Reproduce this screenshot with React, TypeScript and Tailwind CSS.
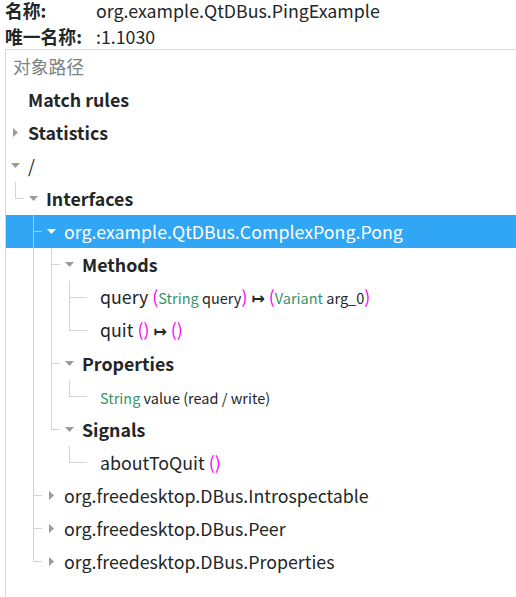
import React from "react";

type G = "none" | "pipe" | "tee" | "ell";
type Arrow = "down" | "right" | "leaf" | "leafline";

type Row = {
  guides: G[];
  arrow: Arrow;
  content: React.ReactNode;
  selected?: boolean;
};

const M = ({ children }: { children: React.ReactNode }) => (
  <span className="text-[#ff00ff]">{children}</span>
);
const T = ({ children }: { children: React.ReactNode }) => (
  <span className="text-[#35946a] text-[14.5px]">{children}</span>
);
const S = ({ children }: { children: React.ReactNode }) => (
  <span className="text-[14.5px]">{children}</span>
);
const Map = () => (
  <span className="font-bold" style={{ fontFamily: '"DejaVu Sans", sans-serif', fontSize: 16 }}>
    ↦
  </span>
);

const rows: Row[] = [
  { guides: [], arrow: "leaf", content: <span className="font-bold">Match rules</span> },
  { guides: [], arrow: "right", content: <span className="font-bold">Statistics</span> },
  { guides: [], arrow: "down", content: <span>/</span> },
  { guides: ["ell"], arrow: "down", content: <span className="font-bold">Interfaces</span> },
  {
    guides: ["none", "tee"],
    arrow: "down",
    content: <span>org.example.QtDBus.ComplexPong.Pong</span>,
    selected: true,
  },
  { guides: ["none", "pipe", "tee"], arrow: "down", content: <span className="font-bold">Methods</span> },
  {
    guides: ["none", "pipe", "pipe", "tee"],
    arrow: "leafline",
    content: (
      <span>
        query <M>(</M>
        <T>String</T>
        <S> query</S>
        <M>)</M> <Map /> <M>(</M>
        <T>Variant</T>
        <S> arg_0</S>
        <M>)</M>
      </span>
    ),
  },
  {
    guides: ["none", "pipe", "pipe", "ell"],
    arrow: "leafline",
    content: (
      <span>
        quit <M>()</M> <Map /> <M>()</M>
      </span>
    ),
  },
  { guides: ["none", "pipe", "tee"], arrow: "down", content: <span className="font-bold">Properties</span> },
  {
    guides: ["none", "pipe", "pipe", "ell"],
    arrow: "leafline",
    content: (
      <span>
        <T>String</T>
        <S> value (read / write)</S>
      </span>
    ),
  },
  { guides: ["none", "pipe", "ell"], arrow: "down", content: <span className="font-bold">Signals</span> },
  {
    guides: ["none", "pipe", "none", "ell"],
    arrow: "leafline",
    content: (
      <span>
        aboutToQuit <M>()</M>
      </span>
    ),
  },
  { guides: ["none", "tee"], arrow: "right", content: <span>org.freedesktop.DBus.Introspectable</span> },
  { guides: ["none", "tee"], arrow: "right", content: <span>org.freedesktop.DBus.Peer</span> },
  { guides: ["none", "ell"], arrow: "right", content: <span>org.freedesktop.DBus.Properties</span> },
];

function Guide({ g, sel }: { g: G; sel?: boolean }) {
  const c = sel ? "border-[#8fd0fa]" : "border-[#d4d4d4]";
  const topRight = g === "pipe" || g === "tee" || g === "ell";
  const botRight = g === "pipe" || g === "tee";
  const horiz = g === "tee" || g === "ell";
  return (
    <div className="grid h-full w-[18px] shrink-0 grid-cols-2 grid-rows-2">
      <div />
      <div className={`${topRight ? "border-l" : ""} ${horiz ? "border-b" : ""} ${c}`} />
      <div />
      <div className={`${botRight ? "border-l" : ""} ${c}`} />
    </div>
  );
}

function ArrowCell({ a, sel }: { a: Arrow; sel?: boolean }) {
  const fill = sel ? "#ffffff" : "#9a9a9a";
  if (a === "leafline") {
    return (
      <div className="grid h-full w-[18px] shrink-0 grid-cols-2 grid-rows-2">
        <div className="border-b border-[#d4d4d4]" />
        <div />
        <div />
        <div />
      </div>
    );
  }
  return (
    <div className="flex h-full w-[18px] shrink-0 items-center justify-center pl-[1px]">
      {a === "down" && (
        <svg width="9" height="5" viewBox="0 0 9 5">
          <polygon points="0,0 9,0 4.5,5" fill={fill} />
        </svg>
      )}
      {a === "right" && (
        <svg width="5" height="9" viewBox="0 0 5 9">
          <polygon points="0,0 5,4.5 0,9" fill={fill} />
        </svg>
      )}
    </div>
  );
}

export default function App() {
  return (
    <div
      className="h-[597px] w-[516px] overflow-hidden bg-white text-[17.8px] text-[#232627]"
      style={{ fontFamily: '"Noto Sans CJK SC", "Noto Sans", sans-serif' }}
    >
      <div className="pl-[5px]">
        <div className="flex h-[21px] items-center leading-[21px]">
          <span className="w-[91px] font-bold">名称:</span>
          <span>org.example.QtDBus.PingExample</span>
        </div>
        <div className="mt-[2px] flex h-[26px] items-center leading-[26px]">
          <span className="w-[91px] font-bold">唯一名称:</span>
          <span>:1.1030</span>
        </div>
      </div>
      <div className="ml-[5px] h-[548px] border-l border-t border-[#d9d9d9]">
        <div className="flex h-[33px] items-center pl-[7px] text-[#7d8285]">对象路径</div>
        {rows.map((r, i) => (
          <div
            key={i}
            className={`flex h-[33px] items-stretch whitespace-nowrap leading-none ${
              r.selected ? "bg-[#30a6f4] text-white" : ""
            }`}
          >
            {r.guides.map((g, j) => (
              <Guide key={j} g={g} sel={r.selected} />
            ))}
            <ArrowCell a={r.arrow} sel={r.selected} />
            <div className="flex items-center pl-[4px]">{r.content}</div>
          </div>
        ))}
      </div>
    </div>
  );
}
